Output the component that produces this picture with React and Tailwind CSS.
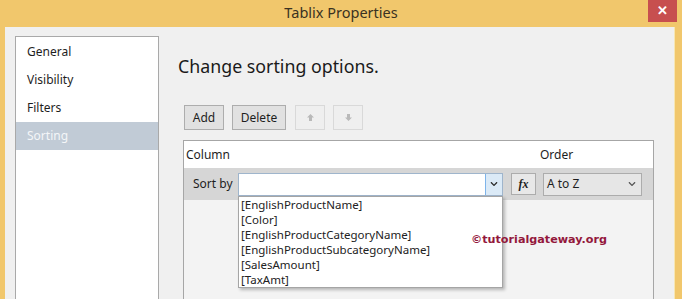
import { FaChevronDown } from "react-icons/fa";

const font = { fontFamily: '"Noto Sans", "Open Sans", sans-serif' };

const fields = [
	"[EnglishProductName]",
	"[Color]",
	"[EnglishProductCategoryName]",
	"[EnglishProductSubcategoryName]",
	"[SalesAmount]",
	"[TaxAmt]",
];

const pages = ["General", "Visibility", "Filters", "Sorting"];

const Arrow = ({ up }) => (
	<svg width="9" height="9" viewBox="0 0 9 9" className="text-[#b9b9b9]">
		{up ? (
			<path d="M4.5 1 L8 4.5 H6 V8 H3 V4.5 H1 Z" fill="currentColor" />
		) : (
			<path d="M4.5 8 L8 4.5 H6 V1 H3 V4.5 H1 Z" fill="currentColor" />
		)}
	</svg>
);

const App = () => {
	return (
		<div
			className="w-[682px] h-[299px] overflow-hidden bg-[#f1c76c] flex flex-col text-[#1e1e1e]"
			style={font}
		>
			{/* title bar */}
			<div className="h-[27px] flex items-start shrink-0">
				<div className="flex-1 text-center text-[14.5px] leading-[24px] text-[#3a3222] pl-[34px]">
					Tablix Properties
				</div>
				<div className="w-[29px] h-[22px] bg-[#c74f4f] text-white flex items-center justify-center text-[13px] font-bold mr-[5px]">
					✕
				</div>
			</div>

			<div className="flex-1 flex ml-[5px] mr-[7px] bg-[#f0f0f0] border-r border-[#f7e7b4]">
				{/* left nav */}
				<div className="ml-[10px] mt-[9px] w-[144px] bg-white border border-[#a9a9a9] border-b-0 pt-[1px] text-[12px]">
					{pages.map((p) => (
						<div
							key={p}
							className={
								"h-[28px] flex items-center pl-[11px] " +
								(p === "Sorting" ? "bg-[#c1cbd6] text-[#f4f6f8]" : "")
							}
						>
							{p}
						</div>
					))}
				</div>

				{/* main */}
				<div className="flex-1 flex flex-col pl-[19px] pt-[27px]">
					<div className="text-[17.8px] leading-[24px] text-[#1a1a1a]">Change sorting options.</div>

					<div className="flex gap-[8px] mt-[27px] ml-[6px] text-[12px]">
						<button className="w-[40px] h-[25px] bg-[#e1e1e1] border border-[#adadad]">Add</button>
						<button className="w-[54px] h-[25px] bg-[#e1e1e1] border border-[#adadad]">Delete</button>
						<button className="w-[30px] h-[25px] bg-[#efefef] border border-[#d9d9d9] flex items-center justify-center ml-[1px]">
							<Arrow up />
						</button>
						<button className="w-[30px] h-[25px] bg-[#efefef] border border-[#d9d9d9] flex items-center justify-center">
							<Arrow />
						</button>
					</div>

					{/* grid */}
					<div className="relative mt-[10px] ml-[5px] w-[471px] flex-1 flex flex-col border-t border-l border-r border-[#a6a6a6] text-[12px]">
						<div className="h-[27px] bg-white flex items-center">
							<div className="w-[356px] pl-[2px]">Column</div>
							<div>Order</div>
						</div>
						<div className="h-[32px] bg-[#d6d6d6] flex items-center">
							<div className="w-[54px] pl-[9px]">Sort by</div>
							<div className="relative w-[265px] h-[23px] bg-white border border-[#9fb5cc] flex justify-end">
								<div className="w-[17px] h-full bg-[#dbeaf7] border-l border-[#7eb4ea] flex items-center justify-center">
									<FaChevronDown className="text-[8px] text-[#2c2c2c]" />
								</div>
								<div className="absolute left-[-1px] top-[22px] w-[265px] bg-white border border-[#a5a5a5] shadow-[2px_2px_3px_rgba(0,0,0,0.25)] pl-[2px] z-10 text-[11.5px] leading-[15px] text-[#222]">
									{fields.map((f) => (
										<div key={f}>{f}</div>
									))}
								</div>
							</div>
							<div className="ml-[8px] w-[25px] h-[22px] bg-[#e8e8e8] border border-[#acacac] flex items-center justify-center italic font-bold text-[12px]" style={{ fontFamily: '"Liberation Serif", serif' }}>
								fx
							</div>
							<div className="ml-[7px] w-[99px] h-[23px] bg-[#e6e6e6] border border-[#acacac] flex items-center justify-between pl-[3px] pr-[5px]">
								<span>A to Z</span>
								<FaChevronDown className="text-[8px] text-[#555]" />
							</div>
						</div>
						<div className="flex-1 bg-[#f3f3f3]"></div>

						<div
							className="absolute left-[287px] top-[91px] z-20 text-[11.2px] font-bold text-[#93183c]"
							style={{ fontFamily: '"DejaVu Sans", sans-serif' }}
						>
							©tutorialgateway.org
						</div>
					</div>
				</div>
			</div>
		</div>
	);
};

export default App;
